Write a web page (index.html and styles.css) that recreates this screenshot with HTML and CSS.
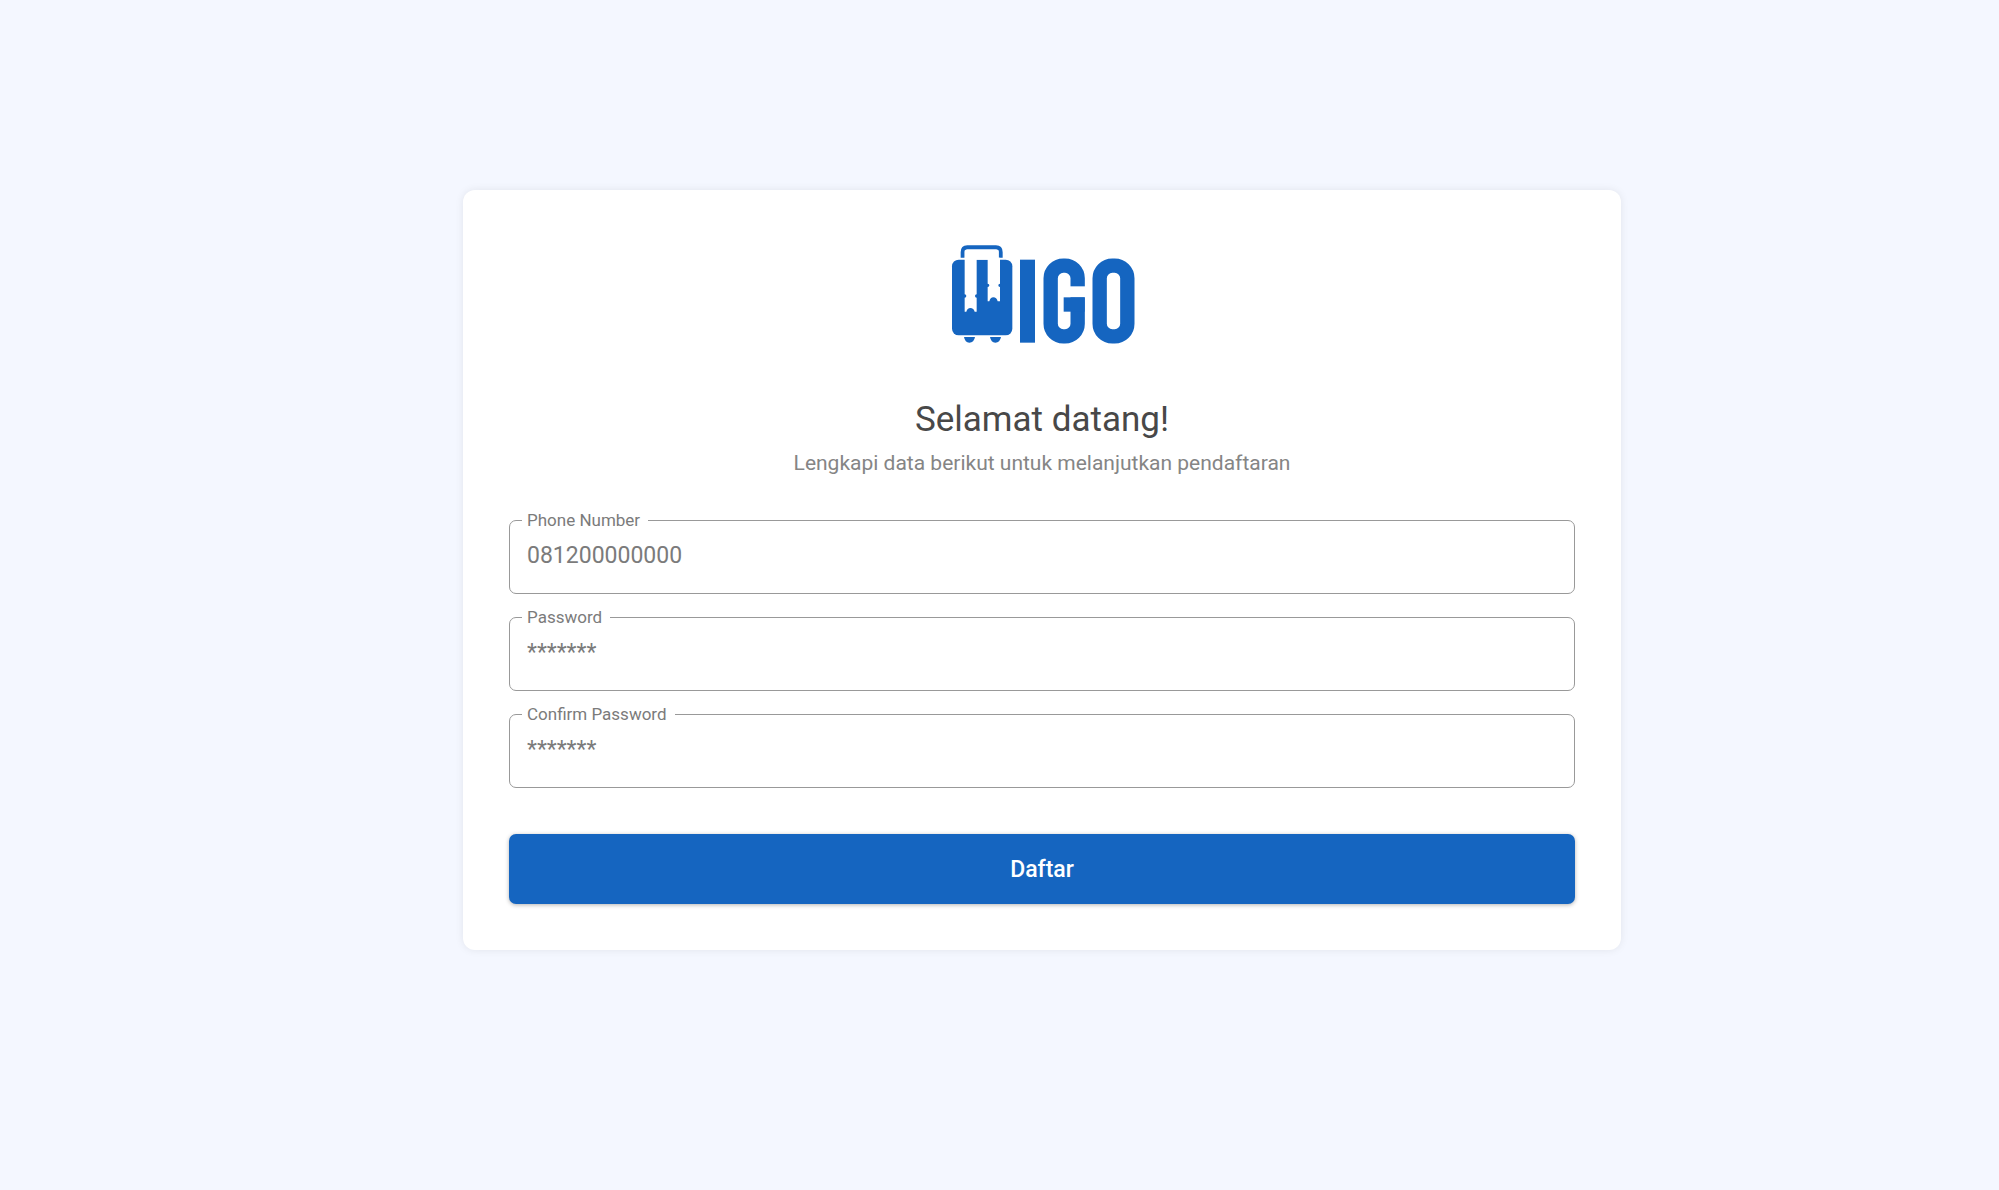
FILE: index.html
```html
<!DOCTYPE html>
<html lang="id">
<head>
  <meta charset="UTF-8" />
  <meta name="viewport" content="width=device-width, initial-scale=1.0" />
  <title>Daftar</title>
  <link rel="stylesheet" href="styles.css">
</head>
<body>
  <main class="page">
    <div class="card">
      <!-- logo -->
      <svg class="logo" viewBox="27 27 561 300" role="img" aria-label="WIGO">
        <path class="logo-line" d="M68 68V52Q68 37 82 37H168Q182 37 182 52V68" />
        <rect class="logo-fill" x="36" y="74" width="181" height="227" rx="20" />
        <path class="logo-cut" d="M74 68H110V178A5 5 0 0 0 110 188V230H104Q101 219 91 219Q82 219 79 230H74V188A5 5 0 0 0 74 178Z" />
        <path class="logo-cut" d="M143 68H180V146A5 5 0 0 0 180 156V199H173Q170 187 160 187Q151 187 148 199H143V156A5 5 0 0 0 143 146Z" />
        <rect class="logo-cut" x="74" y="46" width="102" height="28" />
        <path class="logo-fill" d="M72 306H105Q102 323 88 323Q75 323 72 306ZM150 306H183Q180 323 166 323Q153 323 150 306Z" />
        <rect class="logo-fill" x="240" y="74" width="45" height="249" />
        <rect class="logo-ring" x="332" y="92" width="81" height="212" rx="38" />
        <rect class="logo-cut" x="388" y="154" width="50" height="33" />
        <rect class="logo-fill" x="371" y="187" width="63" height="43" />
        <rect class="logo-ring" x="479" y="92" width="83" height="212" rx="38" />
      </svg>

      <h1>Selamat datang!</h1>
      <p class="subtitle">Lengkapi data berikut untuk melanjutkan pendaftaran</p>

      <form>
        <fieldset class="field">
          <legend><label for="phone">Phone Number</label></legend>
          <input type="tel" id="phone" placeholder="081200000000" />
        </fieldset>
        <fieldset class="field">
          <legend><label for="password">Password</label></legend>
          <input type="password" id="password" placeholder="*******" />
        </fieldset>
        <fieldset class="field">
          <legend><label for="confirmPassword">Confirm Password</label></legend>
          <input type="password" id="confirmPassword" placeholder="*******" />
        </fieldset>
        <button type="submit">Daftar</button>
      </form>
    </div>
  </main>
</body>
</html>
```
FILE: styles.css
```css
body {
  font-family: Roboto, sans-serif;
  background-color: #f4f7ff;
  margin: 0;
}
.page {
  min-height: 100vh;
  padding: 0 0 50px 85px;
  box-sizing: border-box;
  display: flex;
  justify-content: center;
  align-items: center;
}
.card {
  width: 100%;
  max-width: 1158px;
  padding: 54px 46px 46px;
  box-sizing: border-box;
  background-color: #fff;
  border-radius: 12px;
  box-shadow: 0 0 8px rgba(0, 0, 0, 0.08);
  text-align: center;
}
.logo {
  display: block;
  width: 187px;
  height: 100px;
  margin: 0 auto 52px;
}
.logo-fill {
  fill: #1565c0;
}
.logo-cut {
  fill: #fff;
}
.logo-line {
  fill: none;
  stroke: #1565c0;
  stroke-width: 12;
}
.logo-ring {
  fill: none;
  stroke: #1565c0;
  stroke-width: 43;
}
h1 {
  margin: 0;
  font-size: 35px;
  line-height: 48px;
  font-weight: 400;
  color: #484848;
}
.subtitle {
  margin: 3px 0 31px;
  font-size: 21px;
  line-height: 32px;
  color: #858585;
}
form {
  display: flex;
  flex-direction: column;
  gap: 13px;
}
.field {
  min-width: 0;
  margin: 0;
  padding: 0;
  border: 1px solid #999;
  border-radius: 7px;
  text-align: left;
}
legend {
  margin-left: 12px;
  padding: 0 8px 0 5px;
  font-size: 17px;
  line-height: 20px;
  color: #7b7b7b;
}
.field input {
  display: block;
  width: 100%;
  height: 63px;
  padding: 0 17px 12px;
  box-sizing: border-box;
  border: none;
  outline: none;
  background: transparent;
  font-family: inherit;
  font-size: 23px;
  color: #424242;
}
.field input::placeholder {
  color: #7b7b7b;
  opacity: 1;
}
button {
  height: 70px;
  margin-top: 33px;
  border: none;
  border-radius: 7px;
  cursor: pointer;
  background-color: #1565c0;
  box-shadow: 0 1px 4px rgba(0, 0, 0, 0.3);
  font-family: inherit;
  font-size: 23px;
  font-weight: 500;
  color: #fff;
}
button:hover {
  background-color: #0d57ab;
}
```
